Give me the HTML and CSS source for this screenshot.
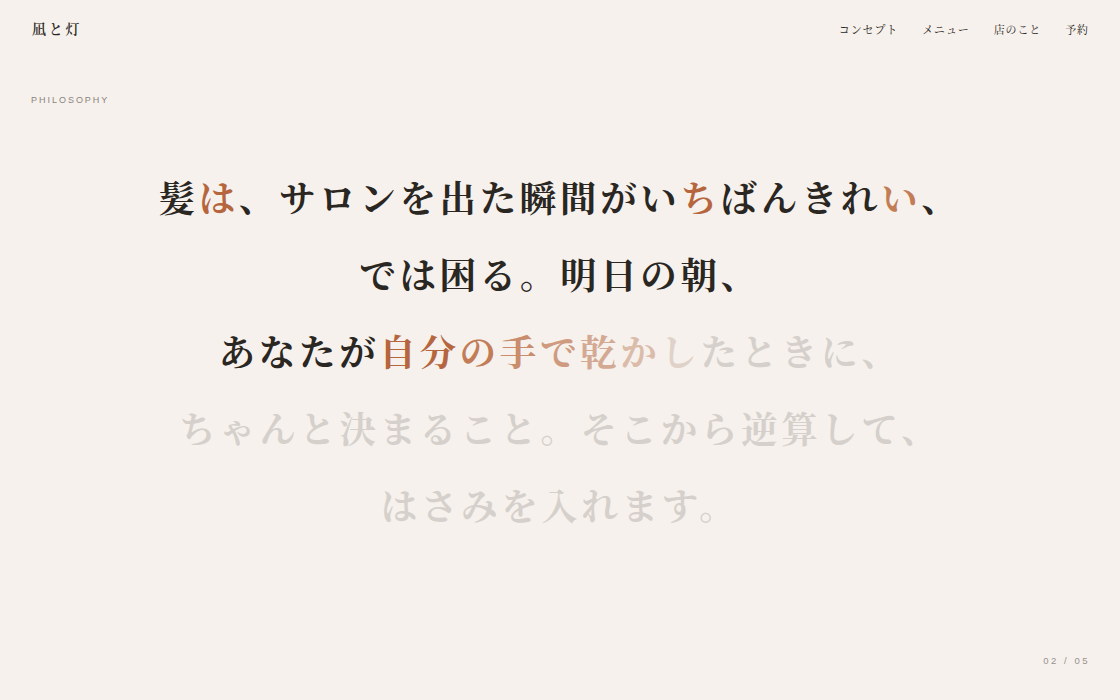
FILE: index.html
```html
<!DOCTYPE html>
<html lang="ja">
<head>
<meta charset="utf-8">
<title>凪と灯 — Philosophy</title>
<link rel="stylesheet" href="styles.css">
</head>
<body>
<div class="page">
  <header class="header">
    <div class="logo">凪と灯</div>
    <nav class="nav">
      <a href="#">コンセプト</a>
      <a href="#">メニュー</a>
      <a href="#">店のこと</a>
      <a href="#">予約</a>
    </nav>
  </header>
  <div class="label">PHILOSOPHY</div>
  <main class="main">
    <p class="copy">
      <span class="line">髪<span class="a1">は</span>、サロンを出た瞬間がい<span class="a1">ち</span>ばんきれ<span class="a2">い</span>、</span>
      <span class="line">では困る。明日の朝、</span>
      <span class="line">あなたが<span class="a1">自分</span><span class="a2">の</span><span class="a3">手</span><span class="a4">で</span><span class="a5">乾</span><span class="a6">か</span><span class="a7">し</span><span class="g">たときに、</span></span>
      <span class="line g">ちゃんと決まること。そこから逆算して、</span>
      <span class="line g">はさみを入れます。</span>
    </p>
  </main>
  <footer class="footer">
    <span class="counter">02 / 05</span>
  </footer>
</div>
</body>
</html>
```

FILE: styles.css
```css
* { box-sizing: border-box; }
html, body { margin: 0; padding: 0; }
body {
  background: #f6f1ec;
  color: #2a2622;
  font-family: "Noto Serif CJK JP", "Noto Serif JP", "IPAMincho", "Noto Sans CJK JP", serif;
}
.page {
  height: 700px;
  display: flex;
  flex-direction: column;
}
.header {
  display: flex;
  justify-content: space-between;
  align-items: center;
  padding: 18px 31px 0 32px;
  height: 40px;
}
.logo {
  font-size: 14px;
  font-weight: 600;
  letter-spacing: 0.2em;
  margin-top: -2px;
}
.nav {
  display: flex;
  gap: 24px;
}
.nav a {
  color: #2a2622;
  text-decoration: none;
  font-size: 11px;
  letter-spacing: 0.08em;
}
.label {
  margin: 55px 0 0 31px;
  font-family: "Liberation Sans", Arial, sans-serif;
  font-size: 9px;
  letter-spacing: 0.22em;
  color: #8a847e;
}
.main {
  flex: 1;
  display: flex;
  align-items: center;
  justify-content: center;
  padding-bottom: 60px;
}
.copy {
  margin: 0;
  text-align: center;
  font-size: 36.5px;
  font-weight: 700;
  letter-spacing: 0.1em;
  line-height: 77px;
}
.line { display: block; }
.a1 { color: #b5663e; }
.a2 { color: #c27d57; }
.a3 { color: #c98c6c; }
.a4 { color: #cf9b80; }
.a5 { color: #d4a993; }
.a6 { color: #dbbba9; }
.a7 { color: #e0d2c8; }
.g { color: #d5d0cb; }
.footer {
  display: flex;
  justify-content: flex-end;
  padding: 0 30px 34px;
}
.counter {
  font-family: "Liberation Sans", Arial, sans-serif;
  font-size: 9.5px;
  letter-spacing: 0.265em;
  color: #98928c;
}
```
